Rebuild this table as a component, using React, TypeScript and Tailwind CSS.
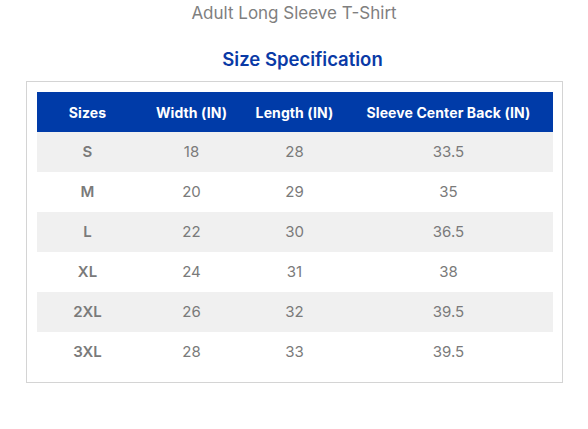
const rows = [
  { size: 'S', width: '18', length: '28', sleeve: '33.5' },
  { size: 'M', width: '20', length: '29', sleeve: '35' },
  { size: 'L', width: '22', length: '30', sleeve: '36.5' },
  { size: 'XL', width: '24', length: '31', sleeve: '38' },
  { size: '2XL', width: '26', length: '32', sleeve: '39.5' },
  { size: '3XL', width: '28', length: '33', sleeve: '39.5' },
];

export default function App() {
  return (
    <div className="w-[588px] h-[429px] bg-white font-['Inter',sans-serif]">
      <h1 className="pt-[3px] text-center text-[17px] leading-[20px] text-[#7f7f7f]">
        Adult Long Sleeve T-Shirt
      </h1>
      <h2 className="mt-[24px] pl-[17px] text-center text-[18.5px] leading-[24px] font-semibold text-[#0a3aa6]">
        Size Specification
      </h2>
      <div className="mx-auto mt-[10px] w-[537px] border border-[#d4d4d4] p-[10px]">
        <table className="w-[516px] table-fixed border-collapse text-center">
          <colgroup>
            <col className="w-[102px]" />
            <col className="w-[106px]" />
            <col className="w-[100px]" />
            <col className="w-[208px]" />
          </colgroup>
          <thead>
            <tr className="h-[40px] bg-[#003ba8] text-white text-[14px] font-bold tracking-[0.1px]">
              <th>Sizes</th>
              <th>Width (IN)</th>
              <th>Length (IN)</th>
              <th>Sleeve Center Back (IN)</th>
            </tr>
          </thead>
          <tbody>
            {rows.map((r, i) => (
              <tr
                key={r.size}
                className={`h-[40px] text-[15px] text-[#7a7a7a] ${i % 2 === 0 ? 'bg-[#f0f0f0]' : 'bg-white'}`}
              >
                <td className="font-semibold">{r.size}</td>
                <td>{r.width}</td>
                <td>{r.length}</td>
                <td>{r.sleeve}</td>
              </tr>
            ))}
          </tbody>
        </table>
      </div>
    </div>
  );
}
